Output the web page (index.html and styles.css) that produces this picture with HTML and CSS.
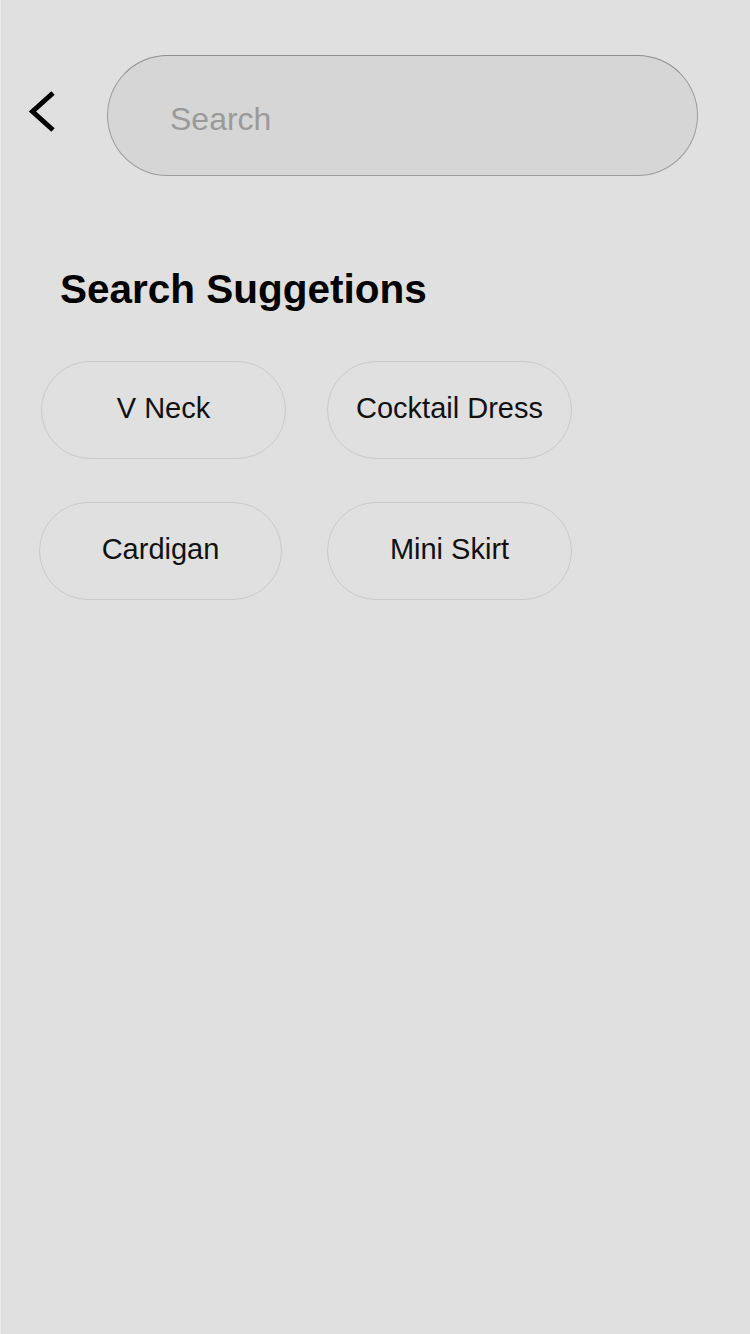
FILE: index.html
```html
<!DOCTYPE html>
<html lang="en">
<head>
<meta charset="utf-8">
<title>Search</title>
<link rel="stylesheet" href="styles.css">
</head>
<body>
<div class="screen">
  <header class="search-header">
    <button class="back" aria-label="Back">
      <svg width="30" height="44" viewBox="0 0 30 44"><path d="M27 3 L6.5 21.5 L27 40" fill="none" stroke="#000" stroke-width="5" stroke-linejoin="miter"/></svg>
    </button>
    <input class="search-input" type="text" placeholder="Search">
  </header>
  <section class="suggestions">
    <h2 class="suggestions-title">Search Suggetions</h2>
    <div class="chip-row">
      <span class="chip">V Neck</span>
      <span class="chip">Cocktail Dress</span>
    </div>
    <div class="chip-row chip-row--second">
      <span class="chip chip--narrow">Cardigan</span>
      <span class="chip">Mini Skirt</span>
    </div>
  </section>
</div>
</body>
</html>
```

FILE: styles.css
```css
html, body {
  margin: 0;
  padding: 0;
  background: #e0e0e0;
}
body {
  font-family: "Liberation Sans", Arial, sans-serif;
  color: #111;
}
.screen {
  width: 750px;
  height: 1334px;
  box-sizing: border-box;
  border-left: 1px solid #ebebeb;
  background: #e0e0e0;
}
.search-header {
  display: flex;
  align-items: flex-start;
  padding: 55px 0 0 25px;
}
.back {
  width: 30px;
  height: 44px;
  padding: 0;
  margin: 35px 51px 0 0;
  border: none;
  background: transparent;
  display: flex;
}
.search-input {
  box-sizing: border-box;
  width: 591px;
  height: 121px;
  border-radius: 61px;
  border: 1.5px solid #9c9c9c;
  border-top-color: #8e8e8e;
  background: #d6d6d6;
  padding: 7px 30px 0 62px;
  font-family: "Liberation Sans", Arial, sans-serif;
  font-size: 32px;
  color: #333;
  outline: none;
  margin: 0;
}
.search-input::placeholder {
  color: #9a9a9a;
}
.suggestions {
  padding-top: 89px;
}
.suggestions-title {
  margin: 0 0 48px 59px;
  font-size: 40.5px;
  line-height: 48px;
  font-weight: 700;
  color: #000;
}
.chip-row {
  display: flex;
  gap: 41px;
  padding-left: 40px;
}
.chip-row--second {
  margin-top: 43px;
  padding-left: 38px;
}
.chip-row--second .chip--narrow {
  margin-right: 4px;
}
.chip {
  box-sizing: border-box;
  width: 245px;
  height: 98px;
  padding-bottom: 3px;
  border: 1.5px solid #cacacd;
  border-radius: 49px;
  display: flex;
  align-items: center;
  justify-content: center;
  font-size: 29px;
  color: #111;
}
.chip--narrow {
  width: 243px;
}
```
